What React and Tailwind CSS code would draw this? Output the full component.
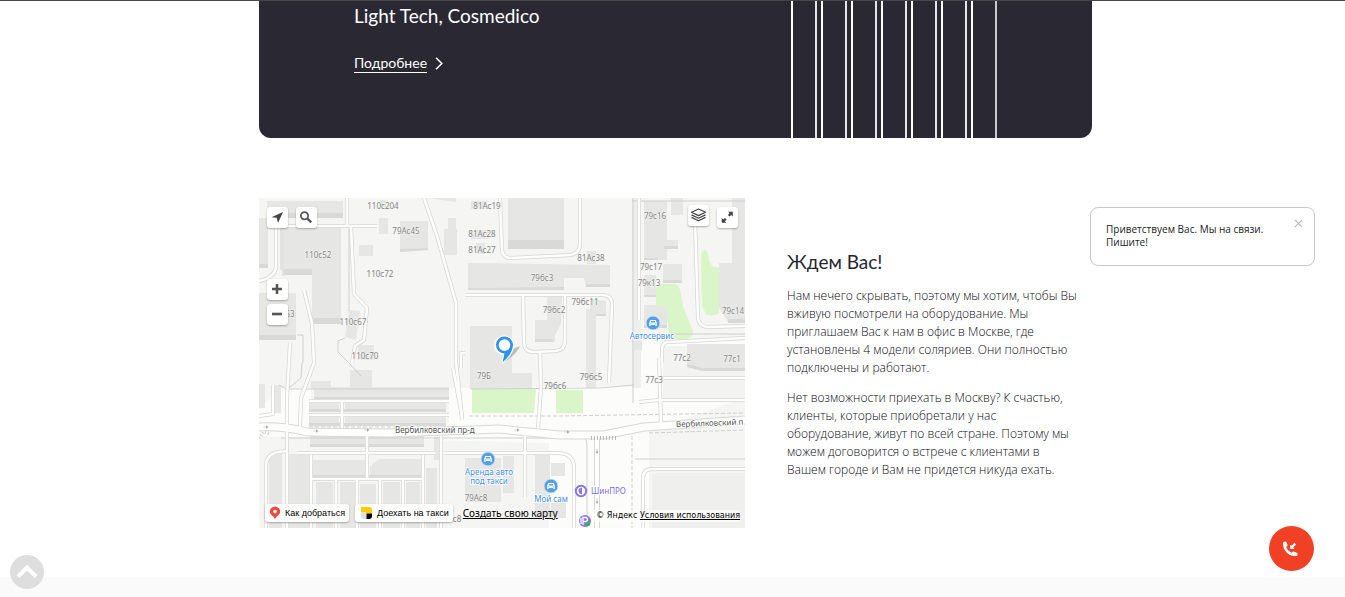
import React from "react";

const buildings = [
  "M8 3H84V20H8Z", "M0 20H9V70H0Z", "M25 28H82V126H53V77H25Z", "M0 95H37V142H0Z",
  "M120 20H129V36H120Z", "M121 2H127V9H121Z", "M141 23H169V52L141 54Z", "M100 47H114V58H100Z", "M189 20H197V31H198V57H185V31H189Z",
  "M169 0H197V4Z", "M212 3H228V11H212Z", "M212 32H230V41H212Z", "M217 45H226V56H217Z",
  "M209 65L351 67V89H327L325 80H305V92H209Z", "M90 112L101 113L97 142L86 139Z", "M99 147H115V162H99Z",
  "M211 128H253V175H273V191H211Z", "M249 0H305V51H249Z", "M328 53H337V66H328Z", "M385 3H408V62H385Z",
  "M412 0H424V17H412Z", "M408 42H419V50H405Z", "M404 66H423V85H404Z", "M385 77H397V99H385Z", "M385 107H408V130H385Z",
  "M375 143H383V152H375Z", "M473 0H486V124H469L460 110V65H473Z",
  "M288 99H303L302 126L296 137V144H276V122H288Z", "M331 101L347 103V118H337V190H327V111H331Z",
  "M428 146H486V173H443L428 168Z", "M52 183H72V191H52Z", "M91 172H113V189H91Z",
  "M55 189H190V201H55Z", "M50 204H80V213H50Z", "M86 204H187V214H86Z", "M50 219H80V227H50Z", "M86 219H187V227H86Z",
  "M51 238H165V248H51Z", "M53 262H108V279H53Z", "M111 268L120 261H162V279H111Z",
  "M57 284H74V330H57Z", "M81 284H96V330H81Z", "M101 286H117V330H101Z", "M124 284H141V330H124Z", "M147 284H161V330H147Z",
  "M10 256H23V330H10Z", "M28 256H50V330H28Z", "M0 186H6V210H0Z", "M15 187H22V215H15Z",
  "M167 270H178V330H167Z", "M175 239H183V262H175Z", "M206 260H242V304H206Z", "M244 258H255V295H244Z",
  "M276 254H291V320H276Z", "M292 265H306V278H292Z", "M292 305H307V320H292Z",
];
const shades = [
  "M8 15H84V20H8Z", "M0 66H9V70H0Z", "M25 71H53V77H25Z", "M53 120H82V126H53Z", "M0 137H37V142H0Z",
  "M249 42H305V51H249Z", "M141 51L169 50V52L141 54Z", "M209 90H224L305 89V92H209Z", "M327 86H351V89H327Z",
  "M385 60H399V62H385Z", "M405 48H419V51H405Z", "M404 82H423V85H404Z", "M385 97H397V99H385Z", "M385 127H408V130H385Z",
  "M276 141H294V144H276Z", "M337 116H347V118H337Z", "M469 121H486V125H469Z", "M428 166L443 170H486V173H443L428 169Z",
  "M51 246H165V249H51Z", "M55 199H190V201H55Z", "M50 211H187V214H50Z", "M50 225H187V228H50Z", "M53 277H162V280H53Z",
];
const greens = [
  "M397 91Q399 86 404 86H416Q420 88 421 92L424 108L434 134Q434 140 427 141H411L408 120V108H397Z",
  "M442 60Q442 53 447 52Q450 56 450 63L453 68L460 70V115Q454 120 447 116L443 108Z",
  "M213 191H277L275 215H213Z", "M297 192H324V215H297Z",
];
const roads = [
  "M17 30V70Q15 80 0 83", "M88 0V28H118M88 28H23", "M92 29L95 96L108 110L105 142L96 148L93 165",
  "M165 0L178 38L197 105V165L200 190L203 222", "M206 97H345Q353 98 353 106L350 185",
  "M45 92L53 125L55 165L42 200L41 229", "M31 145L28 200V330", "M241 0L243 52Q244 60 252 60L312 57Q321 55 321 46V0",
  "M264 98L265 144Q265 154 275 154L297 153Q306 152 306 142V98", "M281 154L282 190L279 230",
  "M436 22L439 120Q440 128 448 129L486 128", "M380 0V122", "M403 165V151Q403 144 410 144L486 140",
  "M50 203H190", "M50 217H190", "M83 204V230", "M108 233V281", "M38 255H176", "M185 255H300Q314 256 315 268V330",
  "M52 257V330M164 257V330", "M52 281H164", "M77 281V330M98 281V330M121 281V330M144 281V330",
  "M182 238V330", "M266 234V299", "M401 180H486M380 204L400 202H486", "M400 160L402 226",
  "M384 330V280Q384 271 393 271H486", "M0 218L14 216V187", "M7 330V267Q8 256 19 254L28 253",
  "M206 155H202V170M194 170L203 218",
];
const labels = [
  [124, 11, "110с204"], [147, 36, "79Ас45"], [59, 60, "110с52"], [121, 79, "110с72"], [94, 127, "110с67"], [106, 161, "110с70"],
  [228, 11, "81Ас19"], [223, 39, "81Ас28"], [223, 55, "81Ас27"], [332, 63, "81Ас38"], [283, 83, "79бс3"], [295, 115, "79бс2"],
  [326, 107, "79бс11"], [396, 21, "79с16"], [392, 72, "79с17"], [390, 88, "79к13"], [474, 116, "79с14"],
  [423, 163, "77с2"], [473, 164, "77с1"], [395, 185, "77с3"], [225, 181, "79Б"], [332, 182, "79бс5"], [296, 191, "79бс6"],
  [217, 303, "79Ас8"], [31, 119, "53"], [198, 324, "с8"],
];

function Car({ x, y }) {
  return (
    <g transform={`translate(${x} ${y})`}>
      <circle r="7" fill="#559fe6" stroke="#d9eafa" strokeWidth="0.8" />
      <path d="M-3.8 3V-.2L-2.7-3H2.7L3.8-.2V3H2.4V1.9H-2.4V3Z" fill="#fff" />
      <path d="M-2.3-.5L-1.8-1.9H1.8L2.3-.5Z" fill="#559fe6" />
      <circle cx="-2.2" cy=".8" r=".6" fill="#559fe6" /><circle cx="2.2" cy=".8" r=".6" fill="#559fe6" />
    </g>
  );
}

function MapDrawing() {
  return (
    <svg viewBox="0 0 486 330" preserveAspectRatio="xMidYMid slice" className="block h-full w-full font-['Noto_Sans',sans-serif]" role="img" aria-label="Карта">
      <path d="M0 0H486V330H0Z" fill="#f5f5f3" />
      <path d="M0 208L28 190H52V230L190 225V190L375 188V143H486V200L390 233V330H290V245L0 238Z" fill="#fcfcfb" />
      <path d="M373 0H382V190H373Z" fill="#eeeeec" />
      <path d="M404 148H486V200L404 202Z" fill="#f3f3f1" />
      <path d="M393 277Q394 275 398 275H486V330H393Z" fill="#efefed" />
      <g fill="#e6e6e5">{buildings.map((d, i) => <path key={i} d={d} />)}</g>
      <g fill="#d9d9d8">{shades.map((d, i) => <path key={i} d={d} />)}</g>
      <g fill="#daf5c8">{greens.map((d, i) => <path key={i} d={d} />)}</g>
      <g fill="none" stroke="#cfcfcd" strokeWidth="1">
        <path d="M22 24V72M24 30V78M90 30V113M374 0V205M20 187L28 191H190M212 191L341 190L375 187M373 3H486" />
        <path d="M375 138L415 136H486M38 137H44V165M86 140L79 143V154L90 165L102 178M376 261H486M326 241Q328 242 328 250V330" />
        <path d="M22 240H325M43 165L42 180L30 190" />
        <path d="M50 229H190L230 231M210 218H300L486 215M373 232V330M390 235L486 232" strokeDasharray="4 2" />
      </g>
      <g fill="none" strokeLinejoin="round">
        <g stroke="#d5d5d3" strokeWidth="4">{roads.map((d, i) => <path key={i} d={d} />)}</g>
        <path d="M0 229Q25 228 48 234L130 235L240 231L300 237H345L385 229L486 222" stroke="#d7d7d5" strokeWidth="9" />
        <path d="M338 238V330" stroke="#d7d7d5" strokeWidth="6" />
        <g stroke="#fdfdfd" strokeWidth="2.6">{roads.map((d, i) => <path key={i} d={d} />)}</g>
        <path d="M0 229Q25 228 48 234L130 235L240 231L300 237H345L385 229L486 222" stroke="#fefefe" strokeWidth="7" />
        <path d="M338 238V330" stroke="#fefefe" strokeWidth="4" />
        <path d="M332 240H357" stroke="#bcbcba" strokeWidth="4" strokeDasharray="1 2" />
        <path d="M0 240L5 234L11 236" stroke="#c8c8c6" strokeWidth="3" strokeDasharray="1 2" />
      </g>
      <g fill="#aaa">
        {[[7, 229], [57, 233], [108, 232], [258, 232], [308, 234]].map(([x, y]) => <path key={x} d={`M${x - 2.5} ${y - 0.3}h2.5v-1.400l2.500 1.700l-2.500 1.700v-1.400h-2.500z`} />)}
        <path d="M337.700 251h.6v2.500h1.200l-1.500 2.500l-1.500-2.500h1.200zM337.700 301h.6v2.500h1.200l-1.500 2.500l-1.500-2.500h1.200z" />
      </g>
      <g fill="#858585" stroke="#f5f5f3" strokeWidth="1.2" paintOrder="stroke" fontSize="8" textAnchor="middle">
        {labels.map(([x, y, t]) => <text key={t} x={x} y={y}>{t}</text>)}
      </g>
      <g fill="#555" stroke="#fff" strokeWidth="1.6" paintOrder="stroke" fontSize="8">
        <text x="136" y="235">Вербилковский пр-д</text>
        <text x="417" y="229" transform="rotate(-2 417 229)">Вербилковский п</text>
      </g>
      <Car x={394} y={125} /><Car x={229} y={261} /><Car x={292} y={288} />
      <g fill="#438fdd" stroke="#fff" strokeWidth="1.6" paintOrder="stroke" fontSize="8" textAnchor="middle">
        <text x="393" y="141">Автосервис</text>
        <text x="230" y="277">Аренда авто</text><text x="230" y="286">под такси</text>
        <text x="292" y="304">Мой сам</text>
      </g>
      <circle cx="322" cy="293" r="5.2" fill="#fff" stroke="#8a75ea" strokeWidth="2" />
      <path d="M323 289.5Q319 290 319.500 293T323 296.500Z" fill="#8a75ea" />
      <text x="332" y="296" fontSize="8" fill="#7d68e0" stroke="#fff" strokeWidth="1.4" paintOrder="stroke">ШинПРО</text>
      <circle cx="326" cy="323" r="6" fill="#8a75ea" />
      <path d="M324 327V319.500H327.500Q329.500 321.500 327.500 323.500H324M322 320V326" stroke="#fff" strokeWidth="1.3" fill="none" />
      <circle cx="329" cy="326" r="2.3" fill="#35b35a" />
      <path d="M244 165L254 151L261 148Q258 156 244 165Z" fill="#777" opacity=".45" />
      <path d="M245 137.500A9.700 9.700 0 0 1 255.300 148Q254 157 244 165.500H242.500L244 156.700A9.600 9.600 0 0 1 245 137.500Z" fill="#fff" />
      <path fillRule="evenodd" d="M245.500 138.500A8.500 8.500 0 0 1 254 147.500Q253 156.500 243.500 164.500L245.500 155.500A8.500 8.500 0 0 1 245.500 138.500ZM245.500 141.200A5.900 5.900 0 1 0 245.500 153A5.900 5.900 0 0 0 245.500 141.200Z" fill="#2a93ee" />
    </svg>
  );
}

const mapBtn = "absolute flex size-[21px] items-center justify-center rounded-[3px] bg-white shadow-[0_1px_2px_rgba(0,0,0,0.3)]";

function MapPanel() {
  return (
    <div className="relative h-[330px] min-w-0 flex-1 overflow-hidden">
      <MapDrawing />
      <button aria-label="Моё местоположение" className={`${mapBtn} left-2 top-[9px]`}>
        <svg viewBox="0 0 21 21" className="size-[21px]"><path d="M16 5L4.500 10.200L9.800 10.700L11 16Z" fill="#444" /></svg>
      </button>
      <button aria-label="Поиск" className={`${mapBtn} left-[37px] top-[9px]`}>
        <svg viewBox="0 0 21 21" className="size-[21px]" fill="none" stroke="#555"><circle cx="8.500" cy="8.700" r="3.600" strokeWidth="1.800" /><path d="M11.200 11.300L15.200 15.300" strokeWidth="2.400" /></svg>
      </button>
      <button aria-label="Слои" className={`${mapBtn} right-9 top-[7px]`}>
        <svg viewBox="0 0 21 21" className="size-[21px]" fill="none" stroke="#444" strokeWidth="1.200" strokeLinejoin="round"><path d="M10.500 4L17.500 7.300L10.500 10.600L3.500 7.300ZM3.500 9.900L10.500 13.200L17.500 9.900M3.500 12.400L10.500 15.700L17.500 12.400" /></svg>
      </button>
      <button aria-label="Развернуть" className={`${mapBtn} right-[7px] top-[9px]`}>
        <svg viewBox="0 0 21 21" className="size-[21px]"><path d="M11 4.700H15.800V9.500L14.200 7.900L12.500 9.600L10.900 8L12.600 6.300ZM4.700 11V15.800H9.500L7.900 14.200L9.600 12.500L8 10.900L6.300 12.600Z" fill="#444" /></svg>
      </button>
      <button aria-label="Приблизить" className={`${mapBtn} left-2 top-[81px]`}>
        <svg viewBox="0 0 21 21" className="size-[21px]"><path d="M5 10H15M10 5V15" stroke="#555" strokeWidth="2.600" /></svg>
      </button>
      <button aria-label="Отдалить" className={`${mapBtn} left-2 top-[106px]`}>
        <svg viewBox="0 0 21 21" className="size-[21px]"><path d="M5 10H15" stroke="#555" strokeWidth="2.600" /></svg>
      </button>
      <div className="absolute bottom-1.5 left-1.5 flex items-center gap-1.5 font-['Liberation_Sans',sans-serif] text-[9px] leading-none text-black">
        <button className="flex h-[18px] items-center gap-1 rounded-[3px] bg-white px-1 shadow-[0_1px_2px_rgba(0,0,0,0.3)]">
          <svg viewBox="0 0 12 14" className="h-[14px] w-3"><path d="M6 .5A5.200 5.200 0 0 1 11.200 5.700C11.200 9 7 9.500 6 13.500C5 9.500 .8 9 .8 5.700A5.200 5.200 0 0 1 6 .5Z" fill="#f04a3e" /><circle cx="6" cy="5.600" r="1.800" fill="#fff" /></svg>
          Как добраться
        </button>
        <button className="flex h-[18px] items-center gap-1 rounded-[3px] bg-white px-1 shadow-[0_1px_2px_rgba(0,0,0,0.3)]">
          <svg viewBox="0 0 14 14" className="size-[14px]"><path d="M2 1H10Q13 1 13 4V7.500H7.500Q7 6 5 6H2Z" fill="#fc0" /><path d="M2 6H5Q7.500 6.500 7.500 9V13H5Q2 13 2 10Z" fill="#e0e0dc" /><path d="M7.500 7.500H13V10Q13 13 10 13H7.500Z" fill="#000" /></svg>
          Доехать на такси
        </button>
        <a href="#create" className="ml-1 font-['Noto_Sans',sans-serif] text-[10px] underline underline-offset-1">Создать свою карту</a>
      </div>
      <p className="absolute bottom-1.5 right-[5px] rounded-xs bg-white/70 pl-1 font-['DejaVu_Sans',sans-serif] text-[8px] leading-3 text-black">
        © Яндекс <a href="#terms" className="underline underline-offset-1">Условия использования</a>
      </p>
    </div>
  );
}

function Stripes() {
  return (
    <div aria-hidden="true" className="flex gap-[22px]">
      <i className="w-0.5 bg-white" />
      {[0, 1, 2, 3, 4, 5].map((n) => (
        <i key={n} className="flex w-2 justify-between"><b className="w-0.5 bg-[#e4e4ea]" /><b className="w-0.5 bg-white" /></i>
      ))}
      <i className="w-0.5 bg-[#c9c9d0]" />
    </div>
  );
}

export default function App() {
  return (
    <div className="flex min-h-screen flex-col border-t border-[#45454a] bg-white font-[Lato,sans-serif] text-[#25252f]">
      <main className="mx-auto w-full max-w-[839px] pl-1.5">
        <section className="flex h-[137px] justify-between overflow-hidden rounded-b-xl bg-[#2a2933] pl-[95px] pr-[95px] text-white">
          <div className="pt-[3px]">
            <p className="text-[19px] leading-6">Light Tech, Cosmedico</p>
            <a href="#more" className="mt-[26px] flex items-center gap-2 text-[14px] leading-7">
              <span className="border-b border-white leading-[18px]">Подробнее</span>
              <svg viewBox="0 0 8 13" className="h-[13px] w-2" fill="none" stroke="#fff" strokeWidth="1.500"><path d="M1 .8L6.800 6.500L1 12.200" /></svg>
            </a>
          </div>
          <Stripes />
        </section>
        <section className="mt-[60px] flex gap-[42px]">
          <MapPanel />
          <div className="w-[305px] shrink-0 pt-[52px]">
            <h2 className="text-[19px] leading-6">Ждем Вас!</h2>
            <div className="mt-[13px] space-y-3 font-['Open_Sans',sans-serif] text-[12px] font-light leading-[18px] text-[#0c0c14]">
              <p>Нам нечего скрывать, поэтому мы хотим, чтобы Вы<br />вживую посмотрели на оборудование. Мы<br />приглашаем Вас к нам в офис в Москве, где<br />установлены 4 модели соляриев. Они полностью<br />подключены и работают.</p>
              <p>Нет возможности приехать в Москву? К счастью,<br />клиенты, которые приобретали у нас<br />оборудование, живут по всей стране. Поэтому мы<br />можем договорится о встрече с клиентами в<br />Вашем городе и Вам не придется никуда ехать.</p>
            </div>
          </div>
        </section>
      </main>
      <footer className="mt-[49px] min-h-5 flex-1 bg-[#fafafa]" />

      <aside className="fixed right-[30px] top-[207px] flex h-[59px] w-[225px] justify-between rounded-lg border border-[#c8c8cb] bg-white pl-[15px] pr-[11px] pt-[15px] font-['Open_Sans',sans-serif] text-[10px] leading-[13px] text-[#222]">
        <p>Приветствуем Вас. Мы на связи.<br />Пишите!</p>
        <button aria-label="Закрыть" className="-mt-1 size-[9px] self-start">
          <svg viewBox="0 0 9 9" className="size-[9px]" stroke="#bbb" strokeWidth="1.200"><path d="M.8 .8L8.200 8.200M8.200 .8L.8 8.200" /></svg>
        </button>
      </aside>
      <button aria-label="Позвонить" className="fixed bottom-[26px] right-[31px] flex size-[45px] items-center justify-center rounded-full bg-[#f04124]">
        <svg viewBox="0 0 20 20" className="mr-1 size-5" fill="none" stroke="#fff" strokeLinecap="round" strokeLinejoin="round"><path d="M4.600 4.600Q4 9 7.500 12.500T15.500 15.400" strokeWidth="2.600" /><path d="M4.900 4.300L5.700 6.200M13.600 14.300L15.800 15.200" strokeWidth="3.600" /><path d="M15.300 4.700L11.500 8.500" strokeWidth="2.400" strokeLinecap="butt" /><path d="M10.500 6.500V9.500H13.500Z" fill="#fff" strokeWidth=".8" /></svg>
      </button>
      <a href="#top" aria-label="Наверх" className="fixed bottom-2 left-2.5 flex size-[34px] items-center justify-center rounded-full bg-[#dedede]">
        <svg viewBox="0 0 34 34" className="size-[34px]" fill="none" stroke="#fff" strokeWidth="4"><path d="M8 21.500L17 12.500L26 21.500" /></svg>
      </a>
    </div>
  );
}
